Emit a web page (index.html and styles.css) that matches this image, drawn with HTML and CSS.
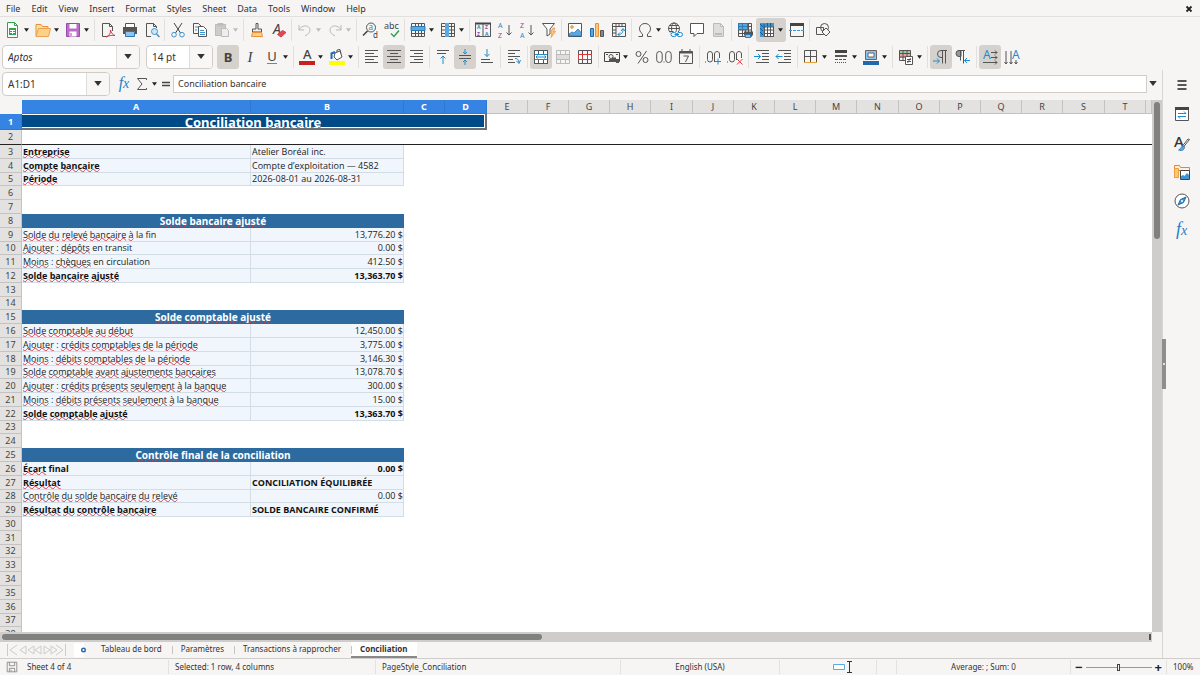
FILE: index.html
```html
<!DOCTYPE html>
<html lang="fr">
<head>
<meta charset="utf-8">
<title>Conciliation bancaire</title>
<link rel="stylesheet" href="styles.css">
</head>
<body>
<svg class="defs" aria-hidden="true">
  <symbol id="grid" viewBox="0 0 16 16"><path d="M1.500 1.500h13v13h-13zM1.500 4.500h13M1.500 8h13M1.500 11.500h13M5.500 1.500v13M8.500 1.500v13M11.500 1.500v13"/></symbol>
  <symbol id="merge" viewBox="0 0 16 16"><path d="M1.500 1.500h13v13h-13zM1.500 5.500h13M1.500 10.500h13M5.500 1.500v4M10.500 1.500v4M5.500 10.500v4M10.500 10.500v4"/></symbol>
  <symbol id="down" viewBox="0 0 6 4"><path d="M0 0h6L3 4z" fill="currentColor" stroke="none"/></symbol>
</svg>

<header>
  <nav class="menubar" aria-label="Menu">
    <button>File</button><button>Edit</button><button>View</button><button>Insert</button><button>Format</button><button>Styles</button><button>Sheet</button><button>Data</button><button>Tools</button><button>Window</button><button>Help</button>
    <button class="close" aria-label="Close"><svg viewBox="0 0 8 8"><path d="M1.500 1.500l5 5M6.500 1.500l-5 5" stroke="#222" stroke-width="1.800"/></svg></button>
  </nav>

  <div class="toolbar standard">
    <div class="group">
      <button class="ic dd" aria-label="New"><svg viewBox="0 0 16 16"><path d="M2.500.500h7l3 3v12h-10z" fill="#fff" stroke="#2da44e"/><path d="M9.500.500v3h3" stroke="#2da44e"/><path d="M4 6h7v7H4z" fill="#2da44e" stroke="none"/><path d="M5 8.500h5M5 10.500h5M7.500 9v3" stroke="#fff"/></svg><svg class="arr"><use href="#down"/></svg></button>
      <button class="ic dd" aria-label="Open"><svg viewBox="0 0 16 16"><path d="M1 14V2.500h5l1.500 2H13V7" fill="#fbdc9b" stroke="#e8913a"/><path d="M1 14.500L3.500 6.500h12l-2 8z" fill="#fcd28a" stroke="#eba351"/></svg><svg class="arr"><use href="#down"/></svg></button>
      <button class="ic dd" aria-label="Save"><svg viewBox="0 0 16 16"><path d="M1.500 1.500h13v13h-13z" fill="#b96fc8" stroke="#9a4bad"/><path d="M4.500 2h7v4.500h-7zM4.500 9.500h7v5h-7z" fill="#fff" stroke="none"/><path d="M6 11v3" stroke="#9a4bad"/></svg><svg class="arr"><use href="#down"/></svg></button>
    </div>
    <div class="group">
      <button class="ic" aria-label="Export as PDF"><svg viewBox="0 0 16 16"><path d="M8 14.500H2.500v-13h7l3 3V9M9.500 1.500v3h3"/><path d="M6 15c3-1 5-4 4.500-7 .5 3 2.500 5 4.500 5.500-3-.5-6 0-9 1.500z" stroke="#d33b4b"/></svg></button>
      <button class="ic" aria-label="Print"><svg viewBox="0 0 16 16"><path d="M3.500 5V1.500h9V5" fill="#fff"/><path d="M1 5h14v7H1z" fill="#555" stroke="none"/><path d="M3.500 9.500h9v5h-9z" fill="#8fc3ea" stroke="#2b79b5"/></svg></button>
      <button class="ic" aria-label="Print preview"><svg viewBox="0 0 16 16"><path d="M7 14.500H2.500v-13h7l3 3V6M9.500 1.500v3h3"/><circle cx="10.500" cy="9.500" r="3" fill="#cfe6f7" stroke="#3a96d6"/><path d="M12.500 12l3 3" stroke="#3a96d6" stroke-width="1.500"/></svg></button>
    </div>
    <div class="group">
      <button class="ic" aria-label="Cut"><svg viewBox="0 0 16 16"><path d="M4 1l6.500 10M12 1L5.500 11" stroke="#444"/><circle cx="4" cy="12.700" r="2.300" stroke="#3a96d6"/><circle cx="12" cy="12.700" r="2.300" stroke="#3a96d6"/></svg></button>
      <button class="ic" aria-label="Copy"><svg viewBox="0 0 16 16"><path d="M6 11.500H1.500v-10h5l3 3"/><path d="M6.500 4.500h5l3 3v7h-8z" fill="#fff"/><path d="M3 5h3M3 8h2M8 8.500h4M8 10.500h5M8 12.500h5" stroke="#3a96d6"/></svg></button>
      <button class="ic dd off" aria-label="Paste"><svg viewBox="0 0 16 16"><path d="M7 13.500H1.500v-11h10V6M4 4V1.500h5V4z" fill="#ccc" stroke="#bbb"/><path d="M7.500 6.500h5l2 2v6h-7z" fill="#eee" stroke="#bbb"/></svg><svg class="arr"><use href="#down"/></svg></button>
    </div>
    <div class="group">
      <button class="ic" aria-label="Clone formatting"><svg viewBox="0 0 16 16"><path d="M7 1.500h2V7h3.500v3h-9V7H7z" fill="#eee"/><path d="M3.500 10.500h9l1 4h-11z" fill="#fbd08b" stroke="#e8913a"/></svg></button>
      <button class="ic" aria-label="Clear formatting"><svg viewBox="0 0 16 16"><text x="2" y="12" class="t14 slant" fill="#444">A</text><path d="M6.500 12.500l5-4 3.500 2-5 4.500z" fill="#e0485a" stroke="#d33b4b"/></svg></button>
    </div>
    <div class="group">
      <button class="ic dd off" aria-label="Undo"><svg viewBox="0 0 16 16"><path d="M2 3v5h5M2 8c3-6 11-5 11 0 0 3-2 4-5 6" stroke="#bbb"/></svg><svg class="arr"><use href="#down"/></svg></button>
      <button class="ic dd off" aria-label="Redo"><svg viewBox="0 0 16 16"><path d="M14 3v5H9M14 8C11 2 3 3 3 8c0 3 2 4 5 6" stroke="#bbb"/></svg><svg class="arr"><use href="#down"/></svg></button>
    </div>
    <div class="group">
      <button class="ic" aria-label="Find and replace"><svg viewBox="0 0 16 16"><circle cx="9" cy="5.500" r="4.500"/><path d="M5.500 9L1 13.500" stroke="#444" stroke-width="1.600"/><text x="6.600" y="8" class="t8" fill="#1e8bcd">a</text><text x="11" y="16" class="t8" fill="#444">d</text></svg></button>
      <button class="ic" aria-label="Spelling"><svg viewBox="0 0 16 16"><text x="0" y="7" class="t9" fill="#444">abc</text><path d="M7 11.500l3 3 5-6" stroke="#2da44e" stroke-width="1.500"/></svg></button>
    </div>
    <div class="group">
      <button class="ic dd" aria-label="Row"><svg viewBox="0 0 16 16"><use href="#grid"/><path d="M1 4.500h14v4H1z" fill="#5aa9e2" stroke="#2b79b5"/></svg><svg class="arr"><use href="#down"/></svg></button>
      <button class="ic dd" aria-label="Column"><svg viewBox="0 0 16 16"><use href="#grid"/><path d="M5 1h4v14H5z" fill="#5aa9e2" stroke="none"/></svg><svg class="arr"><use href="#down"/></svg></button>
    </div>
    <div class="group">
      <button class="ic" aria-label="Sort"><svg viewBox="0 0 16 16"><path d="M.500 1.500h15v13H.500zM8 1.500v13"/><path d="M0 1.500h16" stroke="#444" stroke-width="2"/><text x="2" y="7.300" class="t5" fill="#1e8bcd">A</text><text x="2" y="14" class="t5" fill="#a33bb5">Z</text><text x="10" y="7.300" class="t5" fill="#a33bb5">Z</text><text x="10" y="14" class="t5" fill="#1e8bcd">A</text></svg></button>
      <button class="ic" aria-label="Sort ascending"><svg viewBox="0 0 16 16"><text x="1" y="6" class="t7" fill="#1e8bcd">A</text><text x="1" y="15.500" class="t7" fill="#a33bb5">Z</text><path d="M12 3v10M9.500 10.500L12 13l2.500-2.500"/></svg></button>
      <button class="ic" aria-label="Sort descending"><svg viewBox="0 0 16 16"><text x="1" y="6" class="t7" fill="#a33bb5">Z</text><text x="1" y="15.500" class="t7" fill="#1e8bcd">A</text><path d="M12 3v10M9.500 10.500L12 13l2.500-2.500"/></svg></button>
      <button class="ic" aria-label="AutoFilter"><svg viewBox="0 0 16 16"><path d="M1.500 1.500h12L9 7v5l-3 2V7z" fill="#fff"/><path d="M12 6l-3 5h2l-1 4.500 4.500-6h-2L14 6z" fill="#fbc77d" stroke="#e8913a" stroke-width=".7"/></svg></button>
    </div>
    <div class="group">
      <button class="ic" aria-label="Image"><svg viewBox="0 0 16 16"><path d="M1.500 1.500h13v13h-13z" fill="#fff"/><circle cx="5" cy="5" r="1.300" fill="#fbc77d" stroke="#e8913a"/><path d="M2 14V12l3-2 2 1 4-4 3.500 4v3z" fill="#5aa9e2" stroke="#1c6cab" stroke-width=".7"/></svg></button>
      <button class="ic" aria-label="Chart"><svg viewBox="0 0 16 16"><path d="M1.500 6.500h3v8h-3z" fill="#5aa9e2" stroke="#1c6cab"/><path d="M6.500 1.500h3v13h-3z" fill="#fbc77d" stroke="#e8913a"/><path d="M11.500 8.500h3v6h-3z" fill="#888" stroke="#555"/></svg></button>
      <button class="ic" aria-label="Pivot table"><svg viewBox="0 0 16 16"><path d="M1.500 1.500h13v13h-13zM1.500 4.500h13M5 1.500v13M8 1.500v3M11 1.500v3M2 8h3M2 11h3"/><path d="M7 12.500c4 0 5-2 5-5.500M10 9l2-2.500L14 9M9 10.500l-2 2 2 2" stroke="#1e8bcd"/></svg></button>
    </div>
    <div class="group">
      <button class="ic dd" aria-label="Special character"><svg viewBox="0 0 16 16"><path d="M1.500 14.500h4V12C.5 8.500 2 1.500 8 1.500S15.500 8.500 10.500 12v2.500h4"/></svg><svg class="arr"><use href="#down"/></svg></button>
      <button class="ic" aria-label="Hyperlink"><svg viewBox="0 0 16 16"><circle cx="7" cy="6.500" r="5.500"/><ellipse cx="7" cy="6.500" rx="2.500" ry="5.500"/><path d="M1.500 6.500h11M2.500 3.500h9M2.500 9.500h4"/><path d="M3.500 10h12v5h-12z" fill="#f6f5f4" stroke="none"/><rect x="4" y="10.500" width="5.500" height="4" rx="2" stroke="#1e8bcd"/><rect x="10" y="10.500" width="5.500" height="4" rx="2" stroke="#1e8bcd"/><path d="M7.500 12.500h4.500" stroke="#1e8bcd"/></svg></button>
      <button class="ic" aria-label="Comment"><svg viewBox="0 0 16 16"><path d="M1.500 1.500h13v10H8L5 14.500v-3H1.500z" fill="#fff"/></svg></button>
      <button class="ic off" aria-label="Headers and footers"><svg viewBox="0 0 16 16"><path d="M2.500 1.500h7l3 3v10h-10zM9.500 1.500v3h3" fill="#ddd" stroke="#bbb"/><path d="M4 11h7v2H4z" fill="#bbb" stroke="none"/></svg></button>
    </div>
    <div class="group">
      <button class="ic" aria-label="Print area"><svg viewBox="0 0 16 16"><use href="#grid"/><path d="M1.500 1.500h9v6h-9z" fill="#5aa9e2" stroke="#2b79b5"/><path d="M1.500 4.500h9M5.500 1.500v6" stroke="#2b79b5"/><path d="M7 9.500h9v4H7z" fill="#555" stroke="none"/><path d="M8.500 12.500h5v3h-5z" fill="#8fc3ea" stroke="#2b79b5"/></svg></button>
      <button class="ic dd on" aria-label="Freeze rows and columns"><svg viewBox="0 0 16 16"><path d="M5.500 5h9v9.500h-9z" fill="#fff"/><use href="#grid"/><path d="M1 1h14v3.500H5V15H1z" fill="#3a96d6" stroke="none"/><path d="M1 2l3 3M1 6l3 3M1 10l3 3M5 6V2M8.500 1v3M11.500 1v3" stroke="#155a94"/></svg><svg class="arr"><use href="#down"/></svg></button>
      <button class="ic" aria-label="Split window"><svg viewBox="0 0 16 16"><path d="M1.500 2v12.500h13V2"/><path d="M1 2.500h14" stroke="#444" stroke-width="3"/><path d="M0 8.500h16" stroke="#3a96d6" stroke-dasharray="3 1"/></svg></button>
    </div>
    <div class="group">
      <button class="ic" aria-label="Draw functions"><svg viewBox="0 0 16 16"><circle cx="9.500" cy="5.500" r="4"/><path d="M1.500 5.500h7v7h-7z"/><path d="M11 6l4 4-4 4-4-4z" fill="#f6f5f4"/></svg></button>
    </div>
  </div>

  <div class="toolbar formatting">
    <div class="combo font"><input class="italic" value="Aptos" aria-label="Font name"><button aria-label="Font list"><svg class="big"><use href="#down"/></svg></button></div>
    <div class="combo size"><input value="14 pt" aria-label="Font size"><button aria-label="Size list"><svg class="big"><use href="#down"/></svg></button></div>
    <div class="group">
      <button class="ic on glyph"><b>B</b></button>
      <button class="ic glyph serif"><i>I</i></button>
      <button class="ic dd glyph"><span class="u">U</span><svg class="arr"><use href="#down"/></svg></button>
    </div>
    <div class="group">
      <button class="ic dd" aria-label="Font color"><svg viewBox="0 0 16 16"><text x="4" y="10" class="t13" fill="#444">A</text><path d="M0 12h16v4H0z" fill="#c9211e" stroke="none"/></svg><svg class="arr"><use href="#down"/></svg></button>
      <button class="ic dd" aria-label="Highlighting"><svg viewBox="0 0 16 16"><path d="M6 4l5-2 2 6-5 3-3-3zM8 3V1l3-.5 1 4" fill="#fff"/><path d="M2.500 10V4.500L6 3" stroke="#1c6cab" stroke-width="2"/><path d="M0 12h16v4H0z" fill="#ffff00" stroke="none"/></svg><svg class="arr"><use href="#down"/></svg></button>
    </div>
    <div class="group">
      <button class="ic" aria-label="Align left"><svg viewBox="0 0 16 16"><path d="M1 1.500h13M1 4.500h9M1 7.500h13M1 10.500h9M1 13.500h13"/></svg></button>
      <button class="ic on" aria-label="Center"><svg viewBox="0 0 16 16"><path d="M1 1.500h14M4 4.500h8M1 7.500h14M4 10.500h8M1 13.500h14"/></svg></button>
      <button class="ic" aria-label="Align right"><svg viewBox="0 0 16 16"><path d="M2 1.500h13M6 4.500h9M2 7.500h13M6 10.500h9M2 13.500h13"/></svg></button>
    </div>
    <div class="group">
      <button class="ic" aria-label="Align top"><svg viewBox="0 0 16 16"><path d="M2 1.500h12M2 4.500h9"/><path d="M8 15V7M5.500 9.500L8 7l2.500 2.500" stroke="#1e8bcd"/></svg></button>
      <button class="ic on" aria-label="Center vertically"><svg viewBox="0 0 16 16"><path d="M2 6.500h12M2 9.500h12"/><path d="M8 0v5M6 3l2 2 2-2M8 16v-5M6 13l2-2 2 2" stroke="#1e8bcd"/></svg></button>
      <button class="ic" aria-label="Align bottom"><svg viewBox="0 0 16 16"><path d="M2 10.500h9M2 13.500h12"/><path d="M8 0v7.500M5.500 5L8 7.500 10.500 5" stroke="#1e8bcd"/></svg></button>
    </div>
    <div class="group">
      <button class="ic" aria-label="Wrap text"><svg viewBox="0 0 16 16"><path d="M2 1.500h12M2 4.500h7M2 7.500h12M2 10.500h5M2 13.500h7"/><path d="M9 9.500c3 0 3 1 4 4M10.500 12l2.500 2.500L14.500 11" stroke="#1e8bcd"/></svg></button>
    </div>
    <div class="group">
      <button class="ic on" aria-label="Merge and center"><svg viewBox="0 0 16 16"><path d="M1.500 1.500h13v13h-13z" fill="#fff"/><use href="#merge"/><path d="M2 5.500h12M2 10.500h12M3 8h10M4.500 6.500L3 8l1.500 1.500M11.500 6.500L13 8l-1.500 1.500" stroke="#1e8bcd"/></svg></button>
      <button class="ic off" aria-label="Merge cells"><svg viewBox="0 0 16 16"><path d="M1.500 5.500h13v5h-13z" fill="#ddd"/><use href="#merge"/></svg></button>
      <button class="ic" aria-label="Unmerge cells"><svg viewBox="0 0 16 16"><use href="#merge"/><path d="M1.500 5.500h13v5h-13zM5.500 5.500v5M10.500 5.500v5" fill="#fff" stroke="#d9383a"/></svg></button>
    </div>
    <div class="group">
      <button class="ic dd" aria-label="Currency"><svg viewBox="0 0 16 16"><path d="M.500 3.500h15v9H.500z" stroke="#444"/><circle cx="7" cy="7.500" r="2"/><path d="M2 5.500h2M12 5.500h2" /><path d="M5 13v-3h3V8.500h4V13zM12 10h3v4h-3z" fill="#555" stroke="none"/></svg><svg class="arr"><use href="#down"/></svg></button>
      <button class="ic" aria-label="Percent"><svg viewBox="0 0 16 16"><circle cx="4.500" cy="5" r="2.500"/><circle cx="11.500" cy="11" r="2.500"/><path d="M12.500 2L4 14.500"/></svg></button>
      <button class="ic" aria-label="Number"><svg viewBox="0 0 16 16"><rect x=".7" y="2.500" width="5.500" height="11" rx="2.700"/><rect x="9.700" y="2.500" width="5.500" height="11" rx="2.700"/><path d="M7.500 13h1"/></svg></button>
      <button class="ic" aria-label="Date"><svg viewBox="0 0 16 16"><path d="M1.500 2.500h13v12h-13zM4 0v4M12 0v4" /><path d="M1.500 3.500h13" stroke-width="2"/><path d="M5.500 7h5l-3 6"/></svg></button>
    </div>
    <div class="group">
      <button class="ic" aria-label="Add decimal place"><svg viewBox="0 0 16 16"><path d="M0 13h1"/><rect x="2.500" y="2.500" width="5" height="10.500" rx="2.500"/><path d="M9.500 13V5c0-3.300 5-3.300 5 0v4"/><path d="M10 12.500h6M13 9.500v6" stroke="#1e8bcd"/></svg></button>
      <button class="ic" aria-label="Delete decimal place"><svg viewBox="0 0 16 16"><path d="M0 13h1"/><rect x="2.500" y="2.500" width="5" height="10.500" rx="2.500"/><path d="M9.500 11V5c0-3.300 5-3.300 5 0v4"/><path d="M10 10l5.500 5.500M15.500 10L10 15.500" stroke="#e03c3e"/></svg></button>
    </div>
    <div class="group">
      <button class="ic" aria-label="Increase indent"><svg viewBox="0 0 16 16"><path d="M2 1.500h13M8 4.500h7M8 7.500h7M8 10.500h7M2 13.500h13"/><path d="M0 7.500h6.500M4 5l2.500 2.500L4 10" stroke="#1e8bcd"/></svg></button>
      <button class="ic" aria-label="Decrease indent"><svg viewBox="0 0 16 16"><path d="M2 1.500h13M8 4.500h7M8 7.500h7M8 10.500h7M2 13.500h13"/><path d="M6.500 7.500H0M2.500 5L0 7.500 2.500 10" stroke="#1e8bcd"/></svg></button>
    </div>
    <div class="group">
      <button class="ic dd" aria-label="Borders"><svg viewBox="0 0 16 16"><path d="M1.500 1.500h12v12h-12zM7.500 1.500v12M1.500 7.500h12"/><path d="M1 13.500h13" stroke="#e8a13a"/></svg><svg class="arr"><use href="#down"/></svg></button>
      <button class="ic dd" aria-label="Border style"><svg viewBox="0 0 16 16"><path d="M2 2.500h12" stroke-width="3" stroke="#444"/><path d="M2 7h12" stroke-width="2"/><path d="M2 10.500h12" stroke-dasharray="3 1"/><path d="M2 13.500h12" stroke-dasharray="1 1"/></svg><svg class="arr"><use href="#down"/></svg></button>
      <button class="ic dd" aria-label="Border color"><svg viewBox="0 0 16 16"><path d="M2.500 1.500h11v9h-11z" fill="#8fc3ea" stroke="#666"/><path d="M5 4h6v4H5z" fill="#fff" stroke="#666"/><path d="M0 12h16v4H0z" fill="#2567a8" stroke="none"/></svg><svg class="arr"><use href="#down"/></svg></button>
    </div>
    <div class="group">
      <button class="ic dd" aria-label="Conditional formatting"><svg viewBox="0 0 16 16"><path d="M1 1h11v4H1z" fill="#8fd19e" stroke="none"/><path d="M1 5h11v4H1z" fill="#f0a0a0" stroke="none"/><path d="M1.500 1.500h11v10h-11zM1.500 4.500h11M1.500 8h11M5 1.500v10M9 1.500v10"/><path d="M7.500 7.500h7v8h-7z" fill="#fff"/><path d="M9 10.500h4M9 12.500h4M12.500 9l-3 5"/></svg><svg class="arr"><use href="#down"/></svg></button>
    </div>
    <div class="group">
      <button class="ic on" aria-label="Left-to-right"><svg viewBox="0 0 16 16"><path d="M14 1.500H8a3.500 3.500 0 000 7h1M9.500 1.500v13M12.500 1.500v13"/><path d="M0 12h6M4 9.500L6.500 12 4 14.500" stroke="#1e8bcd"/></svg></button>
      <button class="ic" aria-label="Right-to-left"><svg viewBox="0 0 16 16"><path d="M6 1.500H4a3 3 0 000 6h2z" fill="#999"/><path d="M5.500 1.500v10M8.500 1.500v13M3 1.500h7"/><path d="M15 11.500H9.500M12 9l-2.500 2.500L12 14" stroke="#1e8bcd"/></svg></button>
    </div>
    <div class="group">
      <button class="ic on" aria-label="Horizontal text"><svg viewBox="0 0 16 16"><text x="1" y="10" class="t12" fill="#1e8bcd">A</text><path d="M9 3.500h6M9 8.500h6M1 13.500h14M13 1.500l2 2-2 2M13 6.500l2 2-2 2M13 11.500l2 2-2 2"/></svg></button>
      <button class="ic" aria-label="Vertical text"><svg viewBox="0 0 16 16"><text x="8" y="10" class="t12" fill="#1e8bcd">A</text><path d="M2 2v13M7 2v13M12 11v4M.500 13L2 15l1.500-2M5.500 13L7 15l1.500-2M10.500 13l1.500 2 1.500-2"/></svg></button>
    </div>
  </div>
</header>

<div class="work">
  <main>
    <div class="formulabar">
      <div class="combo name"><input value="A1:D1" aria-label="Name box"><button aria-label="Name list"><svg class="big"><use href="#down"/></svg></button></div>
      <button class="fx" aria-label="Function wizard"><i>f<small>x</small></i></button>
      <button class="ic dd sum" aria-label="Select function"><svg viewBox="0 0 16 16"><path d="M12.500 4V2.500h-9L8 8l-4.500 5.500h9V12"/></svg><svg class="arr"><use href="#down"/></svg></button>
      <button class="ic eq" aria-label="Formula"><svg viewBox="0 0 16 16"><path d="M4 6.500h8M4 9.500h8" stroke="#444" stroke-width="1.500"/></svg></button>
      <input class="formula" value="Conciliation bancaire" aria-label="Input line">
      <button class="expand" aria-label="Expand formula bar"><svg class="big"><use href="#down"/></svg></button>
    </div>

    <div class="sheet">
      <div class="cells">
        <table>
          <colgroup><col class="ch"><col class="ca"><col class="cb"><col><col class="wide"><col span="4"><col class="wide"><col span="4"><col class="wide"><col span="4"><col class="wide"><col><col class="cu"></colgroup>
          <thead>
            <tr><th></th><th class="sel">A</th><th class="sel">B</th><th class="sel">C</th><th class="sel">D</th><th>E</th><th>F</th><th>G</th><th>H</th><th>I</th><th>J</th><th>K</th><th>L</th><th>M</th><th>N</th><th>O</th><th>P</th><th>Q</th><th>R</th><th>S</th><th>T</th><th></th></tr>
          </thead>
          <tbody>
            <tr class="r1"><th class="sel">1</th><td class="title" colspan="4"><div>Conciliation <s>bancaire</s></div></td><td colspan="17"></td></tr>
            <tr class="r2"><th>2</th><td colspan="21"></td></tr>
          </tbody>
          <tbody class="body">
            <tr><th>3</th><td class="c b"><s>Entreprise</s></td><td class="c">Atelier Boréal inc.</td></tr>
            <tr><th>4</th><td class="c b"><s>Compte</s> <s>bancaire</s></td><td class="c">Compte d’exploitation — 4582</td></tr>
            <tr><th>5</th><td class="c b"><s>Période</s></td><td class="c">2026-08-01 au 2026-08-31</td></tr>
            <tr><th>6</th></tr>
            <tr><th>7</th></tr>
            <tr><th>8</th><td class="head" colspan="2"><s>Solde</s> <s>bancaire</s> <s>ajusté</s></td></tr>
            <tr><th>9</th><td class="c"><s>Solde</s> <s>du</s> <s>relevé</s> <s>bancaire</s> <s>à</s> la fin</td><td class="c n">13,776.20 $</td></tr>
            <tr><th>10</th><td class="c"><s>Ajouter</s> : <s>dépôts</s> en transit</td><td class="c n">0.00 $</td></tr>
            <tr><th>11</th><td class="c"><s>Moins</s> : <s>chèques</s> en circulation</td><td class="c n">412.50 $</td></tr>
            <tr><th>12</th><td class="c b"><s>Solde</s> <s>bancaire</s> <s>ajusté</s></td><td class="c n b">13,363.70 $</td></tr>
            <tr><th>13</th></tr>
            <tr><th>14</th></tr>
            <tr><th>15</th><td class="head" colspan="2"><s>Solde</s> <s>comptable</s> <s>ajusté</s></td></tr>
            <tr><th>16</th><td class="c"><s>Solde</s> <s>comptable</s> <s>au</s> <s>début</s></td><td class="c n">12,450.00 $</td></tr>
            <tr><th>17</th><td class="c"><s>Ajouter</s> : <s>crédits</s> <s>comptables</s> <s>de</s> la <s>période</s></td><td class="c n">3,775.00 $</td></tr>
            <tr><th>18</th><td class="c"><s>Moins</s> : <s>débits</s> <s>comptables</s> <s>de</s> la <s>période</s></td><td class="c n">3,146.30 $</td></tr>
            <tr><th>19</th><td class="c"><s>Solde</s> <s>comptable</s> <s>avant</s> <s>ajustements</s> <s>bancaires</s></td><td class="c n">13,078.70 $</td></tr>
            <tr><th>20</th><td class="c"><s>Ajouter</s> : <s>crédits</s> <s>présents</s> <s>seulement</s> <s>à</s> la <s>banque</s></td><td class="c n">300.00 $</td></tr>
            <tr><th>21</th><td class="c"><s>Moins</s> : <s>débits</s> <s>présents</s> <s>seulement</s> <s>à</s> la <s>banque</s></td><td class="c n">15.00 $</td></tr>
            <tr><th>22</th><td class="c b"><s>Solde</s> <s>comptable</s> <s>ajusté</s></td><td class="c n b">13,363.70 $</td></tr>
            <tr><th>23</th></tr>
            <tr><th>24</th></tr>
            <tr><th>25</th><td class="head" colspan="2"><s>Contrôle</s> final <s>de</s> la conciliation</td></tr>
            <tr><th>26</th><td class="c b"><s>Écart</s> final</td><td class="c n b">0.00 $</td></tr>
            <tr><th>27</th><td class="c b"><s>Résultat</s></td><td class="c b">CONCILIATION ÉQUILIBRÉE</td></tr>
            <tr><th>28</th><td class="c"><s>Contrôle</s> <s>du</s> <s>solde</s> <s>bancaire</s> <s>du</s> <s>relevé</s></td><td class="c n">0.00 $</td></tr>
            <tr><th>29</th><td class="c b"><s>Résultat</s> <s>du</s> <s>contrôle</s> <s>bancaire</s></td><td class="c b">SOLDE BANCAIRE CONFIRMÉ</td></tr>
            <tr><th>30</th></tr>
            <tr><th>31</th></tr>
            <tr><th>32</th></tr>
            <tr><th>33</th></tr>
            <tr><th>34</th></tr>
            <tr><th>35</th></tr>
            <tr><th>36</th></tr>
            <tr><th>37</th></tr>
            <tr><th>38</th></tr>
          </tbody>
        </table>
      </div>
      <div class="vscroll"><div class="thumb"></div></div>
    </div>
    <div class="hscroll"><div class="thumb"></div><div class="split"></div></div>

    <div class="tabs">
      <div class="navs">
        <svg viewBox="0 0 60 14"><path d="M1.500 1v12M11 2L4 7l7 5M28 3l-6 4 6 4zM35 3l-6 4 6 4zM20 3l-6 4 6 4zM38 3l6 4-6 4zM45 3l6 4-6 4zM50 2l7 5-7 5M59.500 1v12" stroke="#ccc"/></svg>
      </div>
      <button class="add" aria-label="Add sheet"><svg viewBox="0 0 12 14"><path d="M0 0h10v14H0z" fill="#fff" stroke="none"/><circle cx="9.500" cy="7" r="1.800" fill="#fff" stroke="#2567b0" stroke-width="1.400"/></svg></button>
      <button class="tab">Tableau de bord</button>
      <button class="tab">Paramètres</button>
      <button class="tab">Transactions à rapprocher</button>
      <button class="tab active">Conciliation</button>
    </div>
  </main>

  <aside class="sidebar">
    <button class="handle" aria-label="Hide sidebar"></button>
    <button aria-label="Settings"><svg viewBox="0 0 16 16"><path d="M3.500 4h9M3.500 8h9M3.500 12h9" stroke="#222" stroke-width="1.400"/></svg></button>
    <button aria-label="Properties"><svg viewBox="0 0 16 16"><path d="M1.500 1.500h13v13h-13z" fill="#fff"/><path d="M1 2.500h14" stroke="#444" stroke-width="3"/><path d="M4 7.500h8M10 5.500l2 2M4 10.500h8M6 12.500l-2-2" stroke="#1e8bcd"/></svg></button>
    <button aria-label="Styles"><svg viewBox="0 0 16 16"><text x="0" y="12" class="t15" fill="#333">A</text><path d="M15.500 4.500L9.500 12l-1-1 5.500-7z" fill="#fff"/><path d="M9.500 11c-3 0-2 3-5 4 4 1.500 6-.5 6-3z" fill="#5aa9e2" stroke="#1c6cab" stroke-width=".7"/></svg></button>
    <button aria-label="Gallery"><svg viewBox="0 0 16 16"><path d="M.500 13.500v-12h5l1 2h9v3h-12z" fill="#fdf0dc" stroke="#e8813a"/><path d="M.500 13.500v-9h4v9z" fill="#fbc77d" stroke="#e8a13a"/><path d="M6.500 6.500h9v9h-9z" fill="#fff" stroke="#444"/><path d="M7 15v-3l2-1 1.500 1L13 9l2 2v4z" fill="#3a96d6" stroke="none"/></svg></button>
    <button aria-label="Navigator"><svg viewBox="0 0 16 16"><circle cx="8" cy="8" r="7" fill="#fff"/><path d="M12 4l-2.500 5.500L4 12l2.500-5.500z" fill="#3a96d6" stroke="#1c6cab"/><circle cx="8" cy="8" r="1" fill="#fff" stroke="none"/></svg></button>
    <button class="fx large" aria-label="Functions"><i>f<small>x</small></i></button>
  </aside>
</div>

<footer class="status">
  <div class="s-save"><svg viewBox="0 0 16 16"><path d="M2.500 2.500h11v11h-11zM5 2.500v4h6v-4M5 13.500v-4h6v4M7 11v2" stroke="#888"/></svg></div>
  <div class="s-sheet">Sheet 4 of 4</div>
  <div class="s-sel">Selected: 1 row, 4 columns</div>
  <div class="s-style">PageStyle_Conciliation</div>
  <div class="s-lang">English (USA)</div>
  <div class="s-ins"><svg viewBox="0 0 22 14"><path d="M2.500 4.500h11v5h-11z" fill="#fff" stroke="#5aa9e2"/><path d="M16 1.500h5M18.500 2v10M16 12.500h5" stroke="#333"/></svg></div>
  <div class="s-box"></div>
  <div class="s-box"></div>
  <div class="s-sum">Average: ; Sum: 0</div>
  <div class="s-zoom"><button aria-label="Zoom out">−</button><input type="range" min="0" max="100" value="50" aria-label="Zoom"><button aria-label="Zoom in">+</button></div>
  <div class="s-pct">100%</div>
</footer>
</body>
</html>
```
FILE: styles.css
```css
* { box-sizing: border-box; }

html, body { height: 100%; }

body {
  margin: 0;
  display: flex;
  flex-direction: column;
  overflow: hidden;
  background: #f6f5f4;
  color: #333;
  font: 9px/12px "Noto Sans", "Open Sans", sans-serif;
}

button, input {
  font: inherit;
  color: inherit;
  margin: 0;
  padding: 0;
  border: 0;
  background: none;
}

svg { display: block; fill: none; stroke: #555; overflow: visible; }
.defs { position: absolute; width: 0; height: 0; }

/* Menu */
.menubar {
  display: flex;
  align-items: center;
  gap: 11px;
  height: 17px;
  padding: 1px 7px 0 6px;
  border-bottom: 1px solid #e2e0de;
}
.close { margin-left: auto; }
.close svg { width: 8px; height: 8px; }

/* Toolbars */
.toolbar { display: flex; align-items: center; height: 27px; padding-left: 2px; }
.standard { height: 26px; }
.group { display: flex; align-items: center; }
.group + .group::before {
  content: "";
  width: 1px;
  height: 22px;
  margin: 0 2px 0 1px;
  background: #e2e0de;
}
.formatting .group + .group::before { margin: 0 2px; }
.standard .dd:last-child { margin-right: 1px; }

.ic {
  display: flex;
  align-items: center;
  justify-content: center;
  width: 22px;
  height: 24px;
  border-radius: 3px;
}
.ic svg { width: 16px; height: 16px; }
.dd { width: 30px; padding-left: 3px; justify-content: flex-start; gap: 3px; }
.ic .arr { width: 5px; height: 4px; color: #222; }
.on { background: #d5d1cd; }
.off, .off .arr { color: #bbb; }
.off svg { stroke: #bbb; }
.big { width: 8px; height: 5px; color: #333; }

text { font-family: "Noto Sans", sans-serif; stroke: none; }
.t5 { font-size: 5px; font-weight: bold; }
.t7 { font-size: 7px; }
.t8 { font-size: 8px; }
.t9 { font-size: 9px; }
.t12 { font-size: 12px; }
.t13 { font-size: 13px; font-weight: 500; }
.t14 { font-size: 14px; }
.t15 { font-size: 15px; font-weight: 500; }
.slant { font-style: italic; }

.glyph { font-size: 13px; line-height: 16px; color: #444; }
.serif { font-family: "Liberation Serif", serif; font-size: 15px; }
.u { width: 10px; margin: 0 3px; text-align: center; border-bottom: 1px solid #3a96d6; line-height: 14px; }

.combo {
  display: flex;
  height: 24px;
  border: 1px solid #d0ccc8;
  border-radius: 4px;
  background: #fff;
}
.combo input { flex: 1; min-width: 0; padding-left: 5px; font-size: 10px; }
.combo button {
  display: flex;
  align-items: center;
  justify-content: center;
  width: 23px;
  border-left: 1px solid #dedbd8;
  border-radius: 0 3px 3px 0;
  background: #f8f7f6;
}
.combo .italic { font-style: italic; }
.font { width: 138px; margin-right: 6px; }
.size { width: 67px; margin-right: 4px; }

/* Work area */
.work { flex: 1; display: flex; min-height: 0; }
main { flex: 1; display: flex; flex-direction: column; min-width: 0; }

.formulabar { display: flex; align-items: center; height: 30px; padding: 0 5px 3px 2px; }
.name { width: 108px; margin-right: 4px; }
.fx { width: 20px; font: 16px/16px "Liberation Serif", serif; color: #1e7fc8; }
.fx small { font-size: 14px; }
.large { font-size: 18px; }
.sum { width: 24px; padding: 0; gap: 2px; }
.eq { width: 15px; }
.formula {
  flex: 1;
  height: 18px;
  padding-left: 4px;
  border: 1px solid #d0ccc8;
  background: #fff;
}
.expand { margin-left: 2px; }

.sheet { flex: 1; display: flex; min-height: 0; }
.cells { flex: 1; overflow: hidden; background: #fff; }

table { width: 100%; table-layout: fixed; border-collapse: separate; border-spacing: 0; color: #222; }
.ch { width: 22px; }
.ca { width: 229px; }
.cb { width: 153px; }
.wide { width: 42px; }
.cu { width: 6px; }

th, td { padding: 0; white-space: nowrap; line-height: 12px; overflow: hidden; }
th {
  background: #e3e2e1;
  border-right: 1px solid #c4c3c2;
  border-bottom: 1px solid #c4c3c2;
  color: #444;
  font-weight: normal;
}
thead th { height: 14px; }
thead th:first-child { background: #f6f5f4; border-color: #f6f5f4; }
th.sel { background: #3584e4; border-color: #2f78d2; color: #fff; font-weight: bold; }

.r1, .r1 td { height: 16px; }
.title {
  padding: 1px 1px 1px 0;
  border: solid #6a6f73;
  border-width: 0 2px 2px 0;
  background: #fff;
  color: #fff;
  text-align: center;
  font-weight: bold;
  font-size: 13px;
}
.title div { height: 12px; line-height: 14px; background: #004b87; }
.r2 { height: 15px; }
.r2 th, .r2 td { border-bottom: 1px solid #222; }

.body tr { height: 14px; }
.body tr:nth-child(9n + 3), .body tr:nth-child(9n + 8) { height: 13px; }

.c {
  padding: 0 0 0 1px;
  background: #f1f6fc;
  border-right: 1px solid #d3dde6;
  border-bottom: 1px solid #d3dde6;
  font-family: "Open Sans", "Noto Sans", sans-serif;
}
.b { font-weight: bold; color: #111; }
.n { text-align: right; }
.head {
  background: #2d6a9f;
  border-bottom: 1px solid #2d6a9f;
  color: #fff;
  text-align: center;
  font-weight: bold;
  font-size: 10px;
}

s {
  text-decoration: underline wavy #d84048;
  text-decoration-thickness: 1px;
  text-underline-offset: -1px;
  text-decoration-skip-ink: none;
}

/* Scrollbars */
.vscroll { width: 10px; padding: 2px; background: #cecdcc; }
.vscroll .thumb { height: 26%; border-radius: 3px; background: #80807e; }
.hscroll { display: flex; height: 10px; margin-right: 10px; padding: 2px 1px 2px 2px; background: #cecdcc; }
.hscroll .thumb { width: 47%; border-radius: 3px; background: #80807e; }
.split { width: 2px; margin-left: auto; background: #555; }

/* Sheet tabs */
.tabs { display: flex; height: 16px; font-size: 8px; }
.navs { width: 60px; margin: 1px 8px 0 6px; }
.add { width: 18px; }
.add svg { width: 12px; height: 14px; }
.tab { position: relative; padding: 0 10px 2px 9px; }
.tab + .tab::before {
  content: "";
  position: absolute;
  left: 0;
  top: 4px;
  height: 8px;
  border-left: 1px solid #c4c3c2;
}
.active { padding: 0 9px; background: #fff; font-weight: bold; border-bottom: 2px solid #8a8987; }

/* Sidebar */
.sidebar {
  position: relative;
  display: flex;
  flex-direction: column;
  align-items: center;
  gap: 9px;
  width: 38px;
  padding-top: 5px;
  border-left: 1px solid #d8d6d4;
}
.sidebar button { display: flex; align-items: center; justify-content: center; width: 24px; height: 20px; }
.sidebar svg { width: 16px; height: 16px; }
.sidebar .handle {
  position: absolute;
  left: -1px;
  top: 50%;
  width: 4px;
  height: 50px;
  margin-top: -25px;
  background: #8e8e8c;
}
.sidebar .handle::before { content: ""; width: 2px; height: 2px; border-radius: 1px; background: #fff; }

/* Status bar */
.status { display: flex; align-items: center; height: 17px; border-top: 1px solid #d0cecc; font-size: 8px; }
.status > div { height: 14px; line-height: 14px; border-right: 1px solid #e4e2e0; }
.status > .s-save, .status > .s-ins { border-right-color: transparent; }
.s-save { width: 24px; padding-left: 4px; }
.s-save svg { width: 16px; height: 14px; }
.s-sheet { width: 145px; padding-left: 3px; }
.s-sel { width: 207px; padding-left: 6px; }
.s-style { flex: 1; padding-left: 6px; }
.s-lang { width: 159px; text-align: center; }
.s-ins { width: 77px; padding-left: 51px; }
.s-ins svg { width: 22px; height: 14px; }
.s-box { width: 20px; }
.s-sum { width: 174px; text-align: center; }
.s-zoom { display: flex; align-items: center; width: 96px; padding: 0 4px; }
.s-zoom button { font-weight: bold; font-size: 13px; color: #222; }
.s-zoom input { flex: 1; min-width: 0; margin: 0 3px; appearance: none; height: 1px; background: #999; }
.s-zoom input::-webkit-slider-thumb { appearance: none; width: 3px; height: 7px; border: 1px solid #444; background: #f6f5f4; }
.status .s-pct { width: 33px; padding-left: 6px; border: 0; }
```
